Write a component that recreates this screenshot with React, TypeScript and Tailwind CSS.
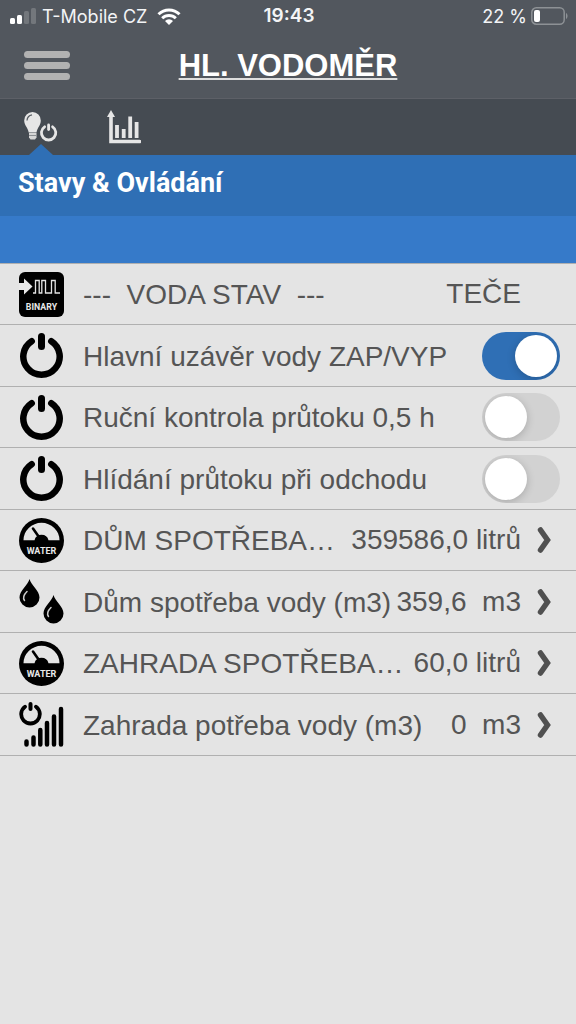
import { useState } from "react";
import type { ReactNode } from "react";

type Row = {
  id: string;
  icon: ReactNode;
  label: string;
  value?: string;
  toggle?: boolean;
  link?: boolean;
};

const CONDENSED = "font-['Roboto','Liberation_Sans',sans-serif]";

function BinaryIcon() {
  return (
    <svg viewBox="0 0 45 45" className="size-[45px]" aria-hidden="true">
      <rect width="45" height="45" rx="6" fill="#000" />
      <path d="M0 11h5V6.500l8.500 8L5 22.500V18H0z" fill="#e8e8e8" />
      <path
        d="M14 21h2.500V8.500h3.700V21h2.600V8.500h3.700V21h6V8.500h3.700V21H41"
        fill="none"
        stroke="#e4e4e4"
        strokeWidth="1.300"
      />
      <text
        x="22.500"
        y="38"
        textAnchor="middle"
        fontSize="8.800"
        fontWeight="700"
        fill="#e8e8e8"
        className={CONDENSED}
      >
        BINARY
      </text>
    </svg>
  );
}

function PowerIcon() {
  return (
    <svg viewBox="0 0 45 45" className="size-[45px]" aria-hidden="true">
      <g fill="none" stroke="#000" strokeWidth="6.500" strokeLinecap="round">
        <path d="M12.700 8.200A18.200 18.200 0 1 0 32.300 8.200" />
        <path d="M22.500 3.500v10" strokeWidth="7" />
      </g>
    </svg>
  );
}

function WaterIcon() {
  return (
    <svg viewBox="0 0 45 45" className="size-[45px]" aria-hidden="true">
      <circle cx="22.500" cy="22.500" r="22.500" fill="#000" />
      <path d="M4.500 22.300a18 17.500 0 0 1 36 0H29.500a7.200 7.200 0 0 0-14 0z" fill="#e4e4e4" />
      <path d="M14 10.500l7 10" stroke="#000" strokeWidth="2.600" strokeLinecap="round" />
      <text
        x="22.500"
        y="35.500"
        textAnchor="middle"
        fontSize="9"
        fontWeight="700"
        fill="#e8e8e8"
        className={CONDENSED}
      >
        WATER
      </text>
    </svg>
  );
}

function DropsIcon() {
  return (
    <svg viewBox="0 0 45 45" className="size-[45px]" aria-hidden="true">
      <path d="M10.500 0c1.500 6 10 11.500 10 18.500a10 10 0 0 1-20 0C.5 11.500 9 6 10.500 0z" />
      <path d="M34.500 16c1.500 6 10 11.500 10 18.500a10 10 0 0 1-20 0c0-7 8.500-12.500 10-18.500z" />
      <g fill="none" stroke="#ccc" strokeWidth="1.500" strokeLinecap="round">
        <path d="M8 12.500c-3.500 3.500-4.700 6-2.500 9" />
        <path d="M32 28.500c-3.500 3.500-4.700 6-2.500 9" />
      </g>
    </svg>
  );
}

function LevelIcon() {
  return (
    <svg viewBox="0 0 45 45" className="size-[45px]" aria-hidden="true">
      <g fill="none" stroke="#000" strokeLinecap="round">
        <path d="M6 4.700A9.300 9.300 0 1 0 17 4.700" strokeWidth="3.800" />
        <path d="M11.500 2v5" strokeWidth="4" />
        <path
          d="M7.500 39.500v3M14.500 35.500v7M21.300 28v14.500M28 21v21.500M35 14.500v28M42 7v35.500"
          strokeWidth="4.500"
        />
      </g>
    </svg>
  );
}

function BulbPowerIcon() {
  return (
    <svg viewBox="0 0 34 30" className="h-[30px] w-[34px]" aria-hidden="true">
      <path
        d="M8.500 0a8.400 8.400 0 0 1 8.300 8.500c0 5-3.500 7-4.300 12H4.700C4 15.500.2 13.500.2 8.500A8.400 8.400 0 0 1 8.500 0z"
        fill="#e6e6e6"
      />
      <path d="M5 21h7.500v4.500L11 27.500H6.500L5 25.500z" fill="#d5d5d5" />
      <path d="M5 23.500h7.500" stroke="#8b8f93" />
      <path d="M3 8.500c.2-3 2-5.200 5-5.700" fill="none" stroke="#555b61" strokeWidth="1.200" />
      <g fill="none" stroke="#e6e6e6" strokeLinecap="round">
        <path d="M20.600 14.800a7.200 7.200 0 1 0 8 0" strokeWidth="2.800" />
        <path d="M24.600 13v4.500" strokeWidth="2.800" />
      </g>
    </svg>
  );
}

function ChartIcon() {
  return (
    <svg viewBox="0 0 34 34" className="size-[34px]" aria-hidden="true">
      <path d="M4 0l4 7H0z" fill="#e6e6e6" />
      <path d="M4 5v26.500h28.500" fill="none" stroke="#e6e6e6" strokeWidth="3.600" strokeLinecap="round" />
      <path
        d="M10 15v13M16.700 19v9M23.200 6.500V28M29.600 12v16"
        stroke="#e6e6e6"
        strokeWidth="3.800"
      />
    </svg>
  );
}

function Chevron() {
  return (
    <svg viewBox="0 0 15 26" className="h-[26px] w-[15px]" aria-hidden="true">
      <path
        d="M3.500 3l7 10-7 10"
        fill="none"
        stroke="#505050"
        strokeWidth="5.500"
        strokeLinecap="round"
      />
    </svg>
  );
}

const rows: Row[] = [
  { id: "stav", icon: <BinaryIcon />, label: "---  VODA STAV  ---", value: "TEČE" },
  { id: "uzaver", icon: <PowerIcon />, label: "Hlavní uzávěr vody ZAP/VYP", toggle: true },
  { id: "kontrola", icon: <PowerIcon />, label: "Ruční kontrola průtoku 0,5 h", toggle: true },
  { id: "hlidani", icon: <PowerIcon />, label: "Hlídání průtoku při odchodu", toggle: true },
  { id: "dum-l", icon: <WaterIcon />, label: "DŮM SPOTŘEBA…", value: "359586,0 litrů", link: true },
  { id: "dum-m3", icon: <DropsIcon />, label: "Dům spotřeba vody (m3)", value: "359,6  m3", link: true },
  { id: "zahrada-l", icon: <WaterIcon />, label: "ZAHRADA SPOTŘEBA…", value: "60,0 litrů", link: true },
  { id: "zahrada-m3", icon: <LevelIcon />, label: "Zahrada potřeba vody (m3)", value: "0  m3", link: true },
];

function StatusBar() {
  return (
    <div className="grid h-8 grid-cols-3 items-center pr-2 pl-[10px] font-['Inter',sans-serif] text-[18px] text-gray-100">
      <div className="flex items-center gap-[6px] whitespace-nowrap">
        <svg viewBox="0 0 26 16" className="h-4 w-[26px]" aria-hidden="true">
          <rect y="10" width="5" height="6" rx="1.500" fill="#fff" />
          <rect x="7" y="7" width="5" height="9" rx="1.500" fill="#fff" />
          <rect x="14" y="3" width="5" height="13" rx="1.500" fill="#73777c" />
          <rect x="21" width="5" height="16" rx="1.500" fill="#73777c" />
        </svg>
        <span>T-Mobile CZ</span>
        <svg viewBox="0 0 24 17" className="ml-1 h-[17px] w-6" aria-hidden="true">
          <g fill="none" stroke="#fff" strokeWidth="3">
            <path d="M1.500 6.300a15 15 0 0 1 21 0" />
            <path d="M5.200 10.300a9.700 9.700 0 0 1 13.600 0" />
          </g>
          <path d="M12 17l-4-4a5.600 5.600 0 0 1 8 0z" fill="#fff" />
        </svg>
      </div>
      <span className="text-center text-[19px] font-semibold">19:43</span>
      <div className="flex items-center justify-end gap-1">
        <span>22 %</span>
        <svg viewBox="0 0 37 18" className="h-[18px] w-[37px]" aria-hidden="true">
          <rect x=".8" y=".8" width="32.400" height="16.400" rx="4.500" fill="none" stroke="#8d9195" strokeWidth="1.500" />
          <rect x="3" y="3" width="6" height="12" rx="2" fill="#fff" />
          <path d="M35 6c2 1 2 5 0 6z" fill="#8d9195" />
        </svg>
      </div>
    </div>
  );
}

function ListRow({ row, on, onToggle }: { row: Row; on: boolean; onToggle: () => void }) {
  const base = "flex w-full grow items-center pr-4 pl-[19px] text-left";
  const content = (
    <>
      <span className="mr-[19px] shrink-0">{row.icon}</span>
      <span className="min-w-0 grow overflow-hidden pt-0.5 whitespace-pre">{row.label}</span>
    </>
  );

  if (row.toggle) {
    return (
      <label htmlFor={row.id} className={base}>
        {content}
        <input
          id={row.id}
          type="checkbox"
          role="switch"
          checked={on}
          onChange={onToggle}
          className="flex h-12 w-[78px] shrink-0 appearance-none items-center overflow-hidden rounded-full bg-[#d2d2d2] px-[3px] before:size-[42px] before:rounded-full before:bg-white before:shadow-[0_2px_8px_rgba(0,0,0,0.2)] checked:justify-end checked:bg-[#2f6fb5]"
        />
      </label>
    );
  }

  const value = <span className="shrink-0 whitespace-pre">{row.value}</span>;
  if (row.link) {
    return (
      <a href={`#${row.id}`} className={base}>
        {content}
        {value}
        <span className="w-[39px] shrink-0 pl-4">
          <Chevron />
        </span>
      </a>
    );
  }
  return (
    <div className={base}>
      {content}
      {value}
      <span className="w-[39px] shrink-0" />
    </div>
  );
}

export default function App() {
  const [on, setOn] = useState<Record<string, boolean>>({ uzaver: true });

  return (
    <div className="min-h-screen bg-[#e4e4e4] font-['Liberation_Sans',Arial,sans-serif] text-[#555]">
      {/* Header */}
      <header className="border-b border-[#5d6067] bg-[#52575e]">
        <StatusBar />
        <div className="grid h-[66px] grid-cols-[70px_1fr_70px] items-center text-white">
          <button type="button" aria-label="Menu" className="flex flex-col gap-1 pl-6">
            <span className="h-[7px] w-full rounded-full bg-[#b2b2b2]" />
            <span className="h-[7px] w-full rounded-full bg-[#b2b2b2]" />
            <span className="h-[7px] w-full rounded-full bg-[#b2b2b2]" />
          </button>
          <h1 className="pt-0.5 text-center text-[31px] font-bold underline decoration-[#dedede] decoration-2 underline-offset-2">
            HL. VODOMĚR
          </h1>
        </div>
      </header>

      {/* Tabs */}
      <nav className="flex h-14 items-center bg-[#454b52]">
        <button type="button" aria-label="Stavy & Ovládání" className="relative flex h-full w-[82px] items-center justify-center">
          <BulbPowerIcon />
          <svg viewBox="0 0 24 11" className="absolute bottom-0 h-[11px] w-6" aria-hidden="true">
            <path d="M0 11L12 0l12 11z" fill="#2f6fb5" />
          </svg>
        </button>
        <button type="button" aria-label="Grafy" className="flex h-full w-[84px] items-center justify-center">
          <ChartIcon />
        </button>
      </nav>

      {/* Section title */}
      <h2 className={`${CONDENSED} bg-[#2f6fb5] px-[18px] pt-[10px] pb-[15px] text-[27px] leading-9 font-bold text-white`}>
        Stavy &amp; Ovládání
      </h2>
      <div className="h-12 border-b border-[#b0b0b0] bg-[#367ac9]" />

      <ul className="text-[28px] leading-8">
        {rows.map((row) => (
          <li
            key={row.id}
            className="flex min-h-[61px] border-b border-[#b0b0b0] even:min-h-[62px]"
          >
            <ListRow
              row={row}
              on={!!on[row.id]}
              onToggle={() => setOn((prev) => ({ ...prev, [row.id]: !prev[row.id] }))}
            />
          </li>
        ))}
      </ul>
    </div>
  );
}
